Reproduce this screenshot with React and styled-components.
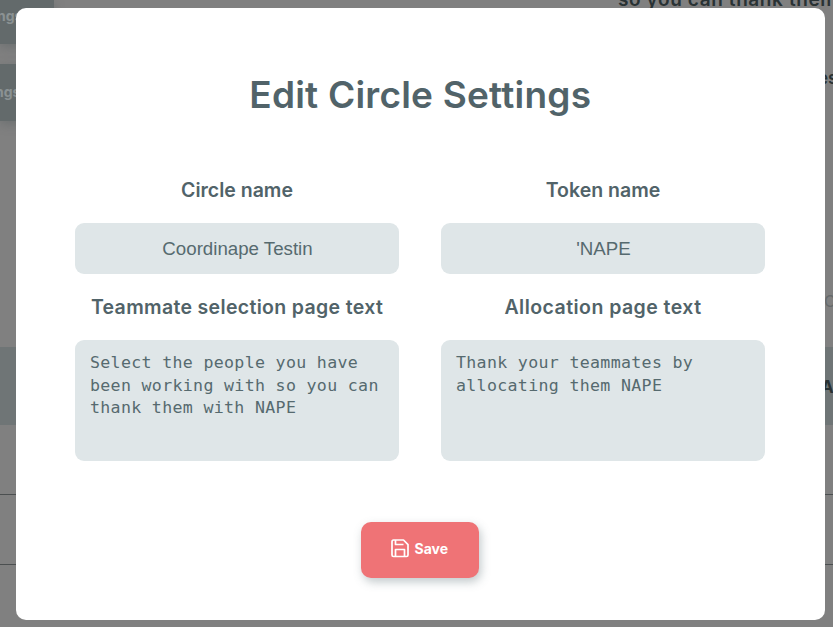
import React from "react";
import styled, { createGlobalStyle } from "styled-components";

const Global = createGlobalStyle`
  * { box-sizing: border-box; }
  body { margin: 0; overflow: hidden; font-family: Inter, "Liberation Sans", sans-serif; color: #516369; }
`;

const Page = styled.div`
  position: relative;
  width: 833px;
  height: 627px;
  overflow: hidden;
  background: #808080;
`;

const Backdrop = styled.div`
  display: flex;
  flex-direction: column;
  height: 627px;
`;

const TopArea = styled.div`
  display: flex;
  justify-content: space-between;
  height: 347px;
`;

const SideButtons = styled.div`
  display: flex;
  flex-direction: column;
  gap: 20px;
  width: 54px;
`;

const SideButton = styled.div`
  height: ${(p) => p.$height}px;
  padding-top: ${(p) => p.$pad}px;
  background: #636a6b;
  box-shadow: 0 3px 10px rgba(70, 80, 82, 0.35);
  color: #8b9293;
  font-size: 14px;
  line-height: 16px;
  font-weight: 700;
  text-indent: ${(p) => p.$indent}px;
`;

const Hints = styled.div`
  display: flex;
  flex-direction: column;
  width: 215px;
  white-space: nowrap;
`;

const HintLine = styled.div`
  height: ${(p) => p.$height}px;
  line-height: 24px;
  margin-top: ${(p) => p.$top || 0}px;
  padding-left: ${(p) => p.$left || 0}px;
  letter-spacing: ${(p) => p.$track || 0}px;
  font-size: ${(p) => p.$size || 19}px;
  font-weight: ${(p) => p.$weight || 600};
  color: ${(p) => p.$color || "#293234"};
`;

const TableHead = styled.div`
  display: flex;
  justify-content: flex-end;
  align-items: center;
  height: 78px;
  padding-top: 2px;
  background: #6f7576;
  color: #293234;
  font-size: 17px;
  font-weight: 700;
`;

const HeadCell = styled.span`
  width: 12px;
`;

const TableRow = styled.div`
  height: 70px;
  border-bottom: 1px solid #4b4f50;
`;

const Modal = styled.form`
  position: absolute;
  left: 15.5px;
  top: 8px;
  width: 809.5px;
  height: 612px;
  padding: 65px 59.5px 0;
  display: flex;
  flex-direction: column;
  align-items: center;
  background: #fff;
  border-radius: 10px;
`;

const Title = styled.h2`
  margin: 0;
  height: 44px;
  font-size: 37px;
  line-height: 44px;
  font-weight: 600;
  letter-spacing: ${(p) => p.$track}px;
  white-space: nowrap;
`;

const Fields = styled.div`
  display: grid;
  grid-template-columns: 324px 324px;
  grid-template-rows: 117px 137px;
  column-gap: 42px;
  margin-top: 61px;
  align-self: flex-start;
`;

const Field = styled.label`
  display: flex;
  flex-direction: column;
  align-items: center;
`;

const Label = styled.span`
  flex-shrink: 0;
  height: 24px;
  margin-bottom: 21px;
  font-size: 19.5px;
  line-height: 24px;
  font-weight: 600;
  letter-spacing: ${(p) => p.$track}px;
  white-space: nowrap;
`;

const Input = styled.input`
  width: 324px;
  height: 51px;
  padding: 1px 10px 0 11px;
  border: 0;
  border-radius: 9px;
  background: #dfe6e8;
  color: #566a6f;
  font: 18.7px "Liberation Sans", Arial, sans-serif;
  text-align: center;
  outline: none;
`;

const TextArea = styled.textarea`
  display: block;
  flex-shrink: 0;
  width: 324px;
  height: 121px;
  padding: 12px 10px 10px 15px;
  border: 0;
  border-radius: 9px;
  background: #dfe6e8;
  color: #566a6f;
  font: 16.6px/22.5px "DejaVu Sans Mono", monospace;
  letter-spacing: 0.32px;
  white-space: pre;
  overflow: hidden;
  resize: none;
  outline: none;
`;

const SaveButton = styled.button`
  display: flex;
  align-items: center;
  justify-content: center;
  gap: 5px;
  width: 118px;
  height: 56px;
  margin-top: 89.5px;
  padding: 0 1px 3px 0;
  border: 0;
  border-radius: 10px;
  background: #ef7376;
  box-shadow: 2px 4px 10px rgba(81, 99, 105, 0.35);
  color: #fff;
  font: 700 14px/18px Inter, sans-serif;
`;

const SaveText = styled.span`
  padding-top: 2px;
`;

const SaveIcon = () => (
  <svg width="18" height="19" viewBox="0 0 18 19" fill="none" stroke="#fff" strokeWidth="1.7" strokeLinejoin="round">
    <path d="M1 3V16Q1 17.5 2.5 17.5H15.5Q17 17.5 17 16V5.6L12.5 1H2.5Q1 1 1 3Z" />
    <path d="M4.5 1V5.5H12.5M4.5 17.5V10.5H13.5V17.5" />
  </svg>
);

const fields = [
  { label: "Circle name", track: 0, value: "Coordinape Testin" },
  { label: "Token name", track: 0, value: "'NAPE" },
  {
    label: "Teammate selection page text",
    track: 0.33,
    value: "Select the people you have\nbeen working with so you can\nthank them with NAPE",
    multiline: true,
  },
  {
    label: "Allocation page text",
    track: 0.45,
    value: "Thank your teammates by\nallocating them NAPE",
    multiline: true,
  },
];

export default function App() {
  return (
    <Page>
      <Global />
      <Backdrop>
        <TopArea>
          <SideButtons>
            <SideButton $height={44} $pad={8} $indent={-3}>ngs</SideButton>
            <SideButton $height={57} $pad={20} $indent={-5}>ngs</SideButton>
          </SideButtons>
          <Hints>
            <HintLine $height={13} $top={-12} $track={0.6}>so you can thank them</HintLine>
            <HintLine $height={24} $top={65} $left={200} $size={17}>es</HintLine>
            <HintLine $height={24} $top={199} $left={206} $size={16} $weight={400} $color="#666a6b">C</HintLine>
          </Hints>
        </TopArea>
        <TableHead><HeadCell>A</HeadCell></TableHead>
        <TableRow />
        <TableRow />
      </Backdrop>
      <Modal onSubmit={(e) => e.preventDefault()}>
        <Title $track={0.22}>Edit Circle Settings</Title>
        <Fields>
          {fields.map((f) => (
            <Field key={f.label}>
              <Label $track={f.track}>{f.label}</Label>
              {f.multiline ? <TextArea defaultValue={f.value} spellCheck={false} /> : <Input defaultValue={f.value} />}
            </Field>
          ))}
        </Fields>
        <SaveButton type="submit">
          <SaveIcon />
          <SaveText>Save</SaveText>
        </SaveButton>
      </Modal>
    </Page>
  );
}
